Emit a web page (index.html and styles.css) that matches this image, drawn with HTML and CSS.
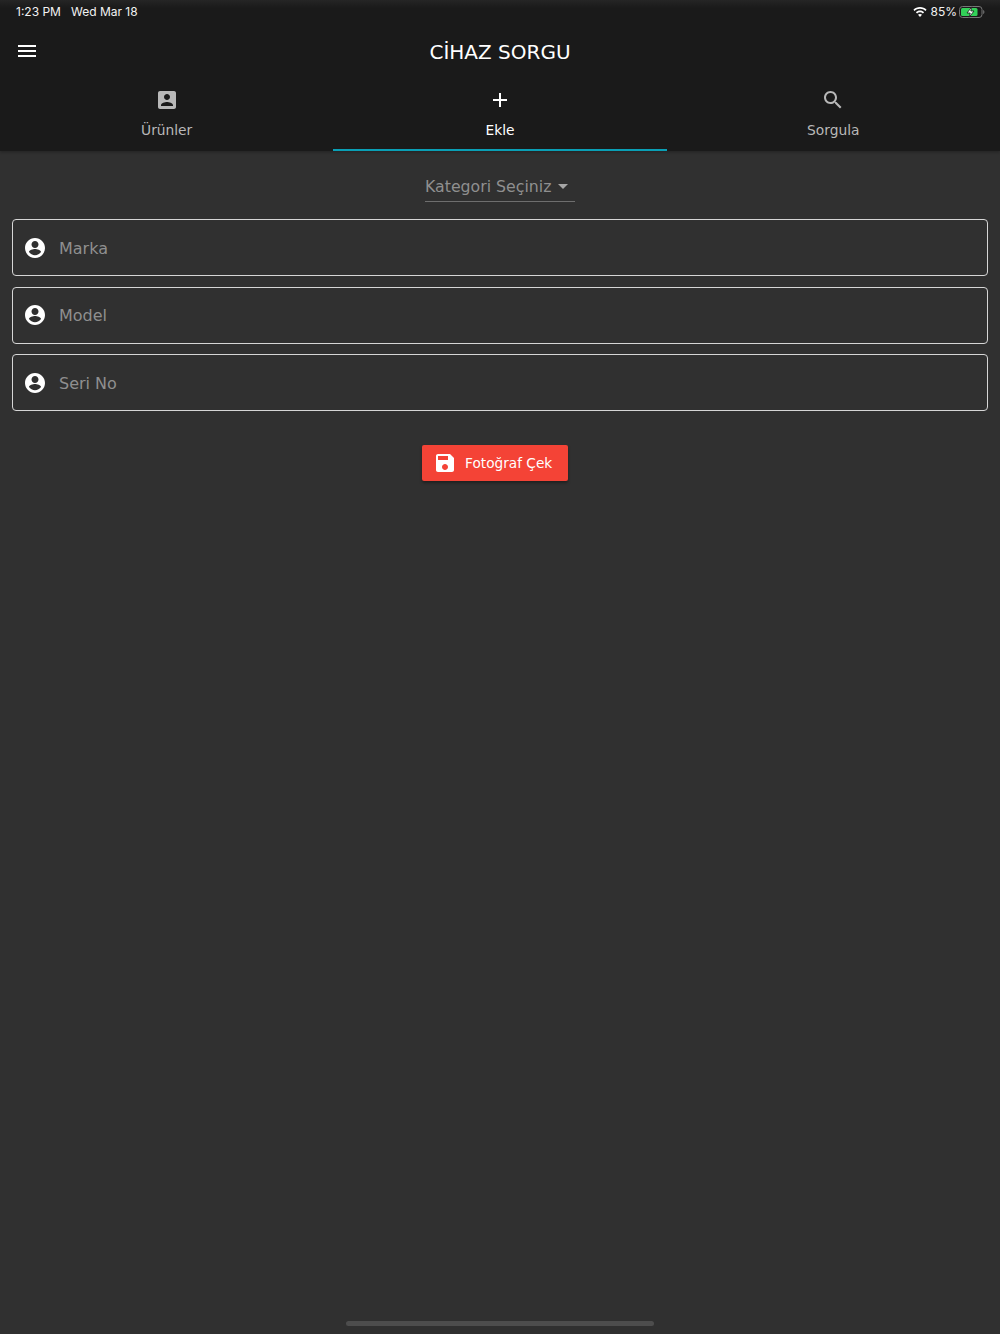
FILE: index.html
```html
<!DOCTYPE html>
<html lang="tr">
<head>
    <meta charset="UTF-8">
    <meta name="viewport" content="width=device-width, initial-scale=1.0">
    <title>Cihaz Sorgu</title>
    <link rel="stylesheet" href="styles.css">
</head>
<body>
    <div class="app">
        <header class="header">
            <div class="status-bar">
                <div class="status-left">
                    <span>1:23 PM</span>
                    <span>Wed Mar 18</span>
                </div>
                <div class="status-right">
                    <svg class="wifi" viewBox="0 0 14 10" width="14" height="10">
                        <path d="M7 0C4.4 0 2.100 1 .4 2.700l1.200 1.300C3 2.600 4.900 1.800 7 1.800s4 .8 5.400 2.200l1.200-1.300C11.900 1 9.600 0 7 0z" fill="#fff"/>
                        <path d="M7 3.500c-1.600 0-3 .6-4.100 1.700l1.200 1.300C4.900 5.700 5.900 5.300 7 5.300s2.100.4 2.900 1.200l1.200-1.300C10 4.100 8.600 3.500 7 3.500z" fill="#fff"/>
                        <path d="M7 7c-.8 0-1.500.3-2 .8L7 10l2-2.200C8.500 7.300 7.800 7 7 7z" fill="#fff"/>
                    </svg>
                    <span>85%</span>
                    <svg class="battery" viewBox="0 0 26 12" width="26" height="12">
                        <rect x=".5" y=".5" width="22.500" height="11" rx="3" fill="none" stroke="#777"/>
                        <rect x="2" y="2" width="16.500" height="8" rx="1.500" fill="#32d158"/>
                        <path d="M24.200 4v4c.7-.2 1.200-1 1.200-2s-.5-1.800-1.200-2z" fill="#777"/>
                        <path d="M12.800 .8 8 7h3.200l-1 4.200L15 5h-3.200z" fill="#fff" stroke="#1a1a1a" stroke-width=".8"/>
                    </svg>
                </div>
            </div>
            <div class="toolbar">
                <button class="menu-btn" aria-label="Menü">
                    <svg viewBox="0 0 24 24" width="24" height="24"><path d="M3 18h18v-2H3v2zm0-5h18v-2H3v2zm0-7v2h18V6H3z" fill="#fff"/></svg>
                </button>
                <h1 class="title">CİHAZ SORGU</h1>
            </div>
            <nav class="tabs">
                <a class="tab">
                    <svg viewBox="0 0 24 24" width="24" height="24"><path d="M3 5v14c0 1.100.9 2 2 2h14c1.100 0 2-.9 2-2V5c0-1.100-.9-2-2-2H5c-1.100 0-2 .9-2 2zm12 4c0 1.660-1.340 3-3 3s-3-1.340-3-3 1.340-3 3-3 3 1.340 3 3zm-9 8c0-2 4-3.100 6-3.100s6 1.100 6 3.100v1H6v-1z" fill="currentColor"/></svg>
                    <span>Ürünler</span>
                </a>
                <a class="tab active">
                    <svg viewBox="0 0 24 24" width="24" height="24"><path d="M19 13h-6v6h-2v-6H5v-2h6V5h2v6h6v2z" fill="currentColor"/></svg>
                    <span>Ekle</span>
                </a>
                <a class="tab">
                    <svg viewBox="0 0 24 24" width="24" height="24"><path d="M15.500 14h-.79l-.28-.27C15.410 12.590 16 11.110 16 9.500 16 5.910 13.090 3 9.500 3S3 5.910 3 9.500 5.910 16 9.500 16c1.610 0 3.090-.59 4.230-1.570l.27.28v.79l5 4.990L20.490 19l-4.990-5zm-6 0C7.010 14 5 11.990 5 9.500S7.010 5 9.500 5 14 7.010 14 9.500 11.990 14 9.500 14z" fill="currentColor"/></svg>
                    <span>Sorgula</span>
                </a>
            </nav>
        </header>

        <main class="content">
            <div class="select-wrap">
                <div class="select">
                    <span>Kategori Seçiniz</span>
                    <i class="caret"></i>
                </div>
            </div>

            <div class="fields">
                <label class="field">
                    <svg viewBox="0 0 24 24" width="24" height="24"><path d="M12 2C6.480 2 2 6.480 2 12s4.480 10 10 10 10-4.480 10-10S17.520 2 12 2zm0 3c1.930 0 3.500 1.570 3.500 3.500S13.930 12 12 12s-3.500-1.570-3.500-3.500S10.070 5 12 5zm0 14.200c-2.500 0-4.710-1.280-6-3.220.03-1.990 4-3.080 6-3.080s5.970 1.090 6 3.080c-1.290 1.940-3.500 3.220-6 3.220z" fill="#fff"/></svg>
                    <span class="placeholder">Marka</span>
                </label>
                <label class="field">
                    <svg viewBox="0 0 24 24" width="24" height="24"><path d="M12 2C6.480 2 2 6.480 2 12s4.480 10 10 10 10-4.480 10-10S17.520 2 12 2zm0 3c1.930 0 3.500 1.570 3.500 3.500S13.930 12 12 12s-3.500-1.570-3.500-3.500S10.070 5 12 5zm0 14.200c-2.500 0-4.710-1.280-6-3.220.03-1.990 4-3.080 6-3.080s5.970 1.090 6 3.080c-1.290 1.940-3.500 3.220-6 3.220z" fill="#fff"/></svg>
                    <span class="placeholder">Model</span>
                </label>
                <label class="field">
                    <svg viewBox="0 0 24 24" width="24" height="24"><path d="M12 2C6.480 2 2 6.480 2 12s4.480 10 10 10 10-4.480 10-10S17.520 2 12 2zm0 3c1.930 0 3.500 1.570 3.500 3.500S13.930 12 12 12s-3.500-1.570-3.500-3.500S10.070 5 12 5zm0 14.200c-2.500 0-4.710-1.280-6-3.220.03-1.990 4-3.080 6-3.080s5.970 1.090 6 3.080c-1.290 1.940-3.500 3.220-6 3.220z" fill="#fff"/></svg>
                    <span class="placeholder">Seri No</span>
                </label>
            </div>

            <div class="actions">
                <button class="photo-btn">
                    <svg viewBox="0 0 24 24" width="24" height="24"><path d="M17 3H5c-1.110 0-2 .9-2 2v14c0 1.100.89 2 2 2h14c1.100 0 2-.9 2-2V7l-4-4zm-5 16c-1.660 0-3-1.340-3-3s1.340-3 3-3 3 1.340 3 3-1.340 3-3 3zm3-10H5V5h10v4z" fill="#fff"/></svg>
                    <span>Fotoğraf Çek</span>
                </button>
            </div>
        </main>

        <div class="home-indicator"></div>
    </div>
</body>
</html>
```

FILE: styles.css
```css
* {
    box-sizing: border-box;
}

body {
    margin: 0;
    background-color: #303030;
    font-family: 'DejaVu Sans', sans-serif;
    color: #fff;
}

.app {
    display: flex;
    flex-direction: column;
    height: 1334px;
    overflow: hidden;
}

.header {
    background-color: #1a1a1a;
    box-shadow: 0 1px 3px rgba(0, 0, 0, 0.3);
}

.status-bar {
    display: flex;
    justify-content: space-between;
    align-items: center;
    height: 24px;
    padding: 0 15px 1px 16px;
    background: linear-gradient(#252525, #1a1a1a 8px);
    font-family: 'Inter', sans-serif;
    font-size: 12px;
    color: #f2f2f2;
}

.status-left {
    display: flex;
    gap: 10px;
}

.status-right {
    display: flex;
    align-items: center;
    gap: 3px;
}

.battery {
    margin-left: -1px;
}

.toolbar {
    display: grid;
    grid-template-columns: 1fr auto 1fr;
    align-items: center;
    height: 52px;
    padding-top: 4px;
}

.menu-btn {
    display: flex;
    justify-self: start;
    align-self: start;
    margin: 11px 0 0 15px;
    padding: 0;
    border: none;
    background: none;
}

.title {
    margin: 0;
    font-size: 20px;
    font-weight: 400;
}

.tabs {
    display: flex;
    height: 75px;
}

.tab {
    flex: 1;
    display: flex;
    flex-direction: column;
    align-items: center;
    padding-top: 12px;
    gap: 9px;
    font-size: 13.800px;
    line-height: 18px;
    color: #b8b8b8;
    border-bottom: 2px solid transparent;
}

.tab.active {
    color: #fff;
    border-bottom-color: #0a9fb5;
}

.content {
    flex: 1;
    padding: 0 12px;
}

.select-wrap {
    display: flex;
    justify-content: center;
    padding-top: 24px;
}

.select {
    display: flex;
    align-items: center;
    justify-content: space-between;
    width: 150px;
    height: 27px;
    padding: 0 7px 3px 0;
    font-size: 15.750px;
    color: #8f8f8f;
    border-bottom: 1px solid #6e6e6e;
}

.caret {
    width: 0;
    height: 0;
    border-left: 5px solid transparent;
    border-right: 5px solid transparent;
    border-top: 5px solid #a6a6a6;
}

.fields {
    display: flex;
    flex-direction: column;
    gap: 10.500px;
    margin-top: 17px;
}

.field {
    display: flex;
    align-items: center;
    gap: 12px;
    height: 57px;
    padding-left: 10px;
    border: 1px solid #d6d6d6;
    border-radius: 4px;
}

.placeholder {
    padding-top: 1px;
    font-size: 16px;
    color: #8f8f8f;
}

.actions {
    display: flex;
    justify-content: center;
    padding-right: 10px;
    margin-top: 34px;
}

.photo-btn {
    display: flex;
    align-items: center;
    gap: 8px;
    width: 146px;
    height: 36px;
    padding: 0 0 0 11px;
    border: none;
    border-radius: 2px;
    background-color: #f44336;
    color: #fff;
    font-family: inherit;
    font-size: 13.700px;
    box-shadow: 0 2px 3px rgba(0, 0, 0, 0.35);
}

.home-indicator {
    width: 308px;
    height: 5px;
    margin: 0 auto 8px;
    border-radius: 3px;
    background-color: #4d4d4d;
}
```
